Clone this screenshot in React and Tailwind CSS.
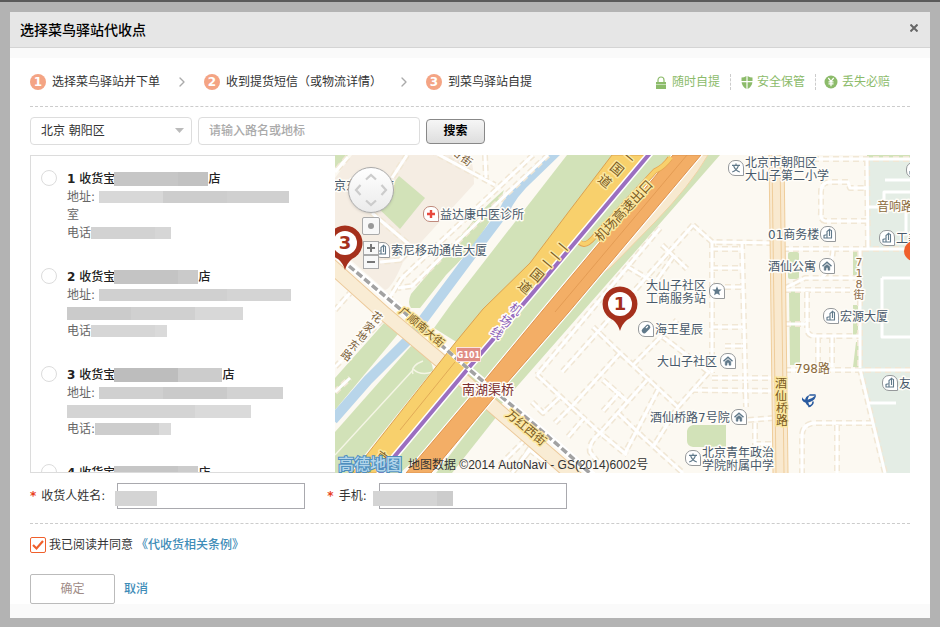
import { useState } from "react";
import clsx from "clsx";
import { ChevronRight } from "lucide-react";

const STEPS = ["选择菜鸟驿站并下单", "收到提货短信（或物流详情）", "到菜鸟驿站自提"];

// Each masked field is a run of grey blocks.
const STATIONS = [
  {
    id: 1,
    name: ["w-16 bg-[#c6c6c6]", "w-[30px] bg-[#c2c2c2]"],
    address: ["w-16 bg-[#d8d8d8]", "w-16 bg-[#cdcdcd]", "w-[62px] bg-[#d0d0d0]"],
    extraText: "室",
    phone: ["w-16 bg-[#d2d2d2]", "w-4 bg-[#d6d6d6]"],
  },
  {
    id: 2,
    name: ["w-16 bg-[#c4c4c4]", "w-5 bg-[#cacaca]"],
    address: ["w-32 bg-[#d0d0d0]", "w-16 bg-[#d4d4d4]"],
    extra: ["w-16 bg-[#cbcbcb]", "w-16 bg-[#d0d0d0]", "w-12 bg-[#d8d8d8]"],
    phone: ["w-16 bg-[#d6d6d6]", "w-3 bg-[#dadada]"],
  },
  {
    id: 3,
    name: ["w-16 bg-[#bdbdbd]", "w-11 bg-[#cccccc]"],
    address: ["w-16 bg-[#d0d0d0]", "w-16 bg-[#cacaca]", "w-14 bg-[#d2d2d2]"],
    extra: ["w-32 bg-[#d4d4d4]", "w-14 bg-[#dadada]"],
    phone: ["w-16 bg-[#cdcdcd]", "w-3 bg-[#dadada]"],
    colon: true,
  },
  {
    id: 4,
    name: ["w-16 bg-[#c6c6c6]", "w-5 bg-[#cccccc]"],
    address: ["w-32 bg-[#d0d0d0]", "w-16 bg-[#d4d4d4]"],
    phone: ["w-16 bg-[#d2d2d2]", "w-4 bg-[#d6d6d6]"],
  },
];

const MINOR_ROADS = [
  // between the expressway and the north-south avenue
  "M660 228 L537 375",
  "M693 225 L603 326 L562 372",
  "M693 225 L712 242 L772 243",
  "M712 242 V373",
  "M662 245 L687 269",
  "M673 257 L650 290",
  "M628 267 L650 280 L663 300",
  "M712 249 H742",
  "M712 268 H742",
  "M742 243 L746 407",
  "M725 287 H742",
  "M725 346 H743",
  "M712 327 H745",
  "M712 378 L772 378",
  "M692 390 L773 391",
  "M593 327 L620 353 L678 407",
  "M537 375 L600 433 L627 455",
  "M618 413 L643 437 L683 473",
  "M620 353 L573 405 L555 423",
  "M647 380 L600 433 Q588 443 590 452 L597 461",
  "M658 390 L625 453",
  "M708 373 L678 407 L653 447",
  "M633 365 L677 320",
  "M663 337 L710 373",
  "M603 380 L628 402",
  "M603 411 L620 392",
  "M532 402 L543 413 L560 397",
  "M585 417 L568 437",
  "M748 420 L773 418",
  "M755 423 V445",
  "M755 444 H773",
  "M530 448 L518 465",
  "M512 473 L530 450 L545 462",
  "M500 465 L540 425",
  // east side
  "M783 159 H910",
  "M867 160 L868 248",
  "M867 221 H825 Q820 220 821 212 V192 Q821 182 830 182 H848 L850 188 H866",
  "M783 249 H910",
  "M833 250 Q832 268 822 278",
  "M860 250 V368",
  "M785 288 L805 278 H857",
  "M785 290 H850",
  "M807 292 V328 Q807 336 815 336 H860",
  "M785 324 H807",
  "M818 337 V367",
  "M832 337 V367",
  "M785 370 H910",
  "M860 369 L885 473",
  "M872 423 H813 Q802 425 802 436 V473",
  "M837 425 V473",
  // west side
  "M348 157 L335 172",
  "M407 155 L392 178",
  "M485 155 L486 178",
  "M430 150 L495 185",
  "M533 155 L402 278 L388 300",
  "M548 155 L495 205 L412 286 L398 288",
  "M372 213 L412 247 L400 260 L380 262",
  "M335 310 L350 293",
  "M382 320 L335 367",
  "M335 392 L350 378",
];

const PARK_ROADS = [
  "M882 278 H910",
  "M882 278 V337 H910",
  "M868 207 H910",
  "M885 180 H910",
  "M884 202 V192 H910",
  "M868 403 H896",
  "M906 212 V232",
];

function Blocks({ parts, className }) {
  return (
    <span className={clsx("flex", className)} aria-hidden="true">
      {parts.map((part, i) => (
        <span key={i} className={part} />
      ))}
    </span>
  );
}

function Steps() {
  return (
    <ol className="flex items-center">
      {STEPS.map((step, i) => (
        <li key={step} className="flex items-center">
          {i > 0 && <ChevronRight size={16} strokeWidth={2} className="mx-3.5 text-[#aaa]" />}
          <span className="mr-1.5 flex size-4 items-center justify-center rounded-full bg-[#f4a484] text-xs leading-4 font-bold text-white">
            {i + 1}
          </span>
          {step}
        </li>
      ))}
    </ol>
  );
}

function Promises() {
  return (
    <ul className="flex items-center text-[#8cbb6a]">
      <li className="flex items-center gap-1.5 pr-2.5">
        <svg width="10" height="13" viewBox="0 0 10 13" fill="none">
          <path d="M2 7V4a3 3 0 0 1 6 0v3" stroke="currentColor" strokeWidth="1.2" />
          <path d="M0 6h10v2.500H0zM0 9h10v4H0z" fill="currentColor" />
        </svg>
        随时自提
      </li>
      <li className="flex items-center gap-1 border-l border-dashed border-[#ccc] px-2.5">
        <svg width="12" height="13" viewBox="0 0 12 13" fill="currentColor">
          <path d="M.5 1.500Q3 1.500 5.400 0V5H.500zM11.500 1.500Q9 1.500 6.600 0V5h4.900zM.600 6.200h4.800V13Q1 10.500.600 6.200zM11.400 6.200H6.600V13Q11 10.500 11.400 6.200z" />
        </svg>
        安全保管
      </li>
      <li className="flex items-center gap-1 border-l border-dashed border-[#ccc] pl-2">
        <svg width="14" height="14" viewBox="0 0 14 14" fill="none">
          <circle cx="7" cy="7" r="6.500" fill="currentColor" />
          <path d="M4.300 3 7 6.300 9.700 3M7 6.300V11.200M4.500 6.800h5M4.500 8.900h5" stroke="#fff" strokeWidth="1.200" />
        </svg>
        丢失必赔
      </li>
    </ul>
  );
}

function StationList({ selected, onSelect }) {
  return (
    <ul className="h-[318px] w-[305px] shrink-0 overflow-y-auto border border-r-0 border-[#dcdcdc] pt-3.5 pl-2.5 [scrollbar-width:none]">
      {STATIONS.map((s) => (
        <li key={s.id} className="mb-[26px] flex gap-2.5">
          <input
            type="radio"
            id={`station-${s.id}`}
            name="station"
            checked={selected === s.id}
            onChange={() => onSelect(s.id)}
            className="size-4 shrink-0 appearance-none rounded-full border border-[#dcdcdc] bg-white checked:border-[#f0602c] checked:bg-[#f0602c]"
          />
          <label htmlFor={`station-${s.id}`} className="block leading-[18px] text-[#666]">
            <span className="flex h-[18px] items-center font-medium text-[#222]">
              <b className="mr-1">{s.id}</b>收货宝
              <Blocks parts={s.name} className="-ml-px h-3.5" />店
            </span>
            <span className="flex h-[18px] items-center">
              地址:
              <Blocks parts={s.address} className="ml-1 h-3" />
            </span>
            <span className="flex h-[18px] items-center">
              {s.extraText}
              {s.extra && <Blocks parts={s.extra} className="h-[13px]" />}
            </span>
            <span className="flex h-[18px] items-center">
              {s.colon ? "电话:" : "电话"}
              <Blocks parts={s.phone} className="h-3" />
            </span>
          </label>
        </li>
      ))}
    </ul>
  );
}

function Label({ x, y, children, fill = "#48596b", halo = "#fffdf8", rotate = 0, size = 12, anchor = "start" }) {
  return (
    <text
      transform={`translate(${x} ${y}) rotate(${rotate})`}
      dy={size / 3 + 0.5}
      fontSize={size}
      fill={fill}
      stroke={halo}
      strokeWidth="3"
      strokeLinejoin="round"
      paintOrder="stroke"
      textAnchor={anchor}
    >
      {children}
    </text>
  );
}

// One character per point, for names that follow a road downwards.
function RoadName({ chars, ...rest }) {
  return chars.map(([c, x, y], i) => (
    <Label key={i} x={x} y={y} anchor="middle" {...rest}>
      {c}
    </Label>
  ));
}

const POI_GLYPHS = {
  building: (
    <path
      d="M-4.500 4H4M-4 4V1.500L-1 .500V4M-1 3V-2.500L1.500-4.500V2M1.500-4.500 3.500-3.500V4"
      fill="none"
      stroke="#60798a"
      strokeWidth="1.100"
    />
  ),
  home: (
    <g fill="none" stroke="#60798a">
      <path d="M-4.500 .300 0-3.800 4.500 .300" strokeWidth="1.500" />
      <path d="M-2.800 .800 0-1.500 2.800 .800V4.200H1V1.800H-1V4.200H-2.800Z" fill="#60798a" strokeWidth=".5" />
    </g>
  ),
  star: <path d="M0-4.800 1.300-1.600 4.700-1.400 2.100.8 2.900 4.200 0 2.400-2.900 4.200-2.100.8-4.700-1.400-1.300-1.600Z" fill="#60798a" />,
  pill: (
    <g transform="rotate(-45)">
      <rect x="-5" y="-2.500" width="10" height="5" rx="2.500" fill="#60798a" />
      <rect x="0.500" y="-1.300" width="3" height="1.200" rx=".6" fill="#fff" />
    </g>
  ),
  cross: <path d="M-4 0H4M0 -4V4" stroke="#e8493f" strokeWidth="2.400" />,
  school: <path d="M0-4.500V-3M-4-2.600H4M2.500-2.600Q1 2.500-3.800 4M-2.500-2.600Q-1 2.500 3.800 4" fill="none" stroke="#60798a" strokeWidth="1.200" />,
};

function Poi({ x, y, kind }) {
  return (
    <g transform={`translate(${x} ${y})`}>
      <path
        d="M-1-7.500H1A6.500 6.500 0 0 1 7.500-1V7.500H-1A6.500 6.500 0 0 1-7.500 1V-1A6.500 6.500 0 0 1-1-7.500Z"
        fill="#fff"
        stroke={kind === "cross" ? "#c08a7c" : "#96999b"}
      />
      {POI_GLYPHS[kind]}
    </g>
  );
}

function Pin({ x, y, label }) {
  return (
    <g transform={`translate(${x} ${y})`}>
      <path d="M0 27Q-2 20-7 16A17.500 17.500 0 1 1 7 16Q2 20 0 27Z" fill="#a5301c" />
      <circle r="12" fill="#fff" />
      <text y="6" textAnchor="middle" fontSize="18" fontWeight="700" fill="#a5301c">
        {label}
      </text>
    </g>
  );
}

function Roads({ paths, edge }) {
  return (
    <g fill="none" strokeLinejoin="round">
      {edge && paths.map((d) => <path key={d} d={d} stroke="#f1e7d5" strokeWidth="6" strokeDasharray="6 4" />)}
      {paths.map((d) => (
        <path key={d} d={d} stroke="#fff" strokeWidth="3" />
      ))}
    </g>
  );
}

function MapDrawing() {
  const brown = { fill: "#7a5a22", halo: "#fbe7a0" };
  return (
    <svg viewBox="335 155 575 318" preserveAspectRatio="xMinYMid slice" className="size-full" role="img" aria-label="地图">
      <rect x="335" y="155" width="575" height="318" fill="#fcf9f2" />
      <path d="M352 155H470Q474 168 474 184L403 262Q392 288 385 290L335 246V178Z" fill="#f5ede3" />
      <path d="M399 176 425 198 400 229 376 206Z" fill="#d2e2b8" />
      <path d="M335 155H348L335 168Z" fill="#d2e2b8" />

      {/* parkland */}
      <g fill="#d2e2b8">
        <path d="M504 190Q480 211 470 225L411 294Q407 303 411 308H420L446 275Q490 232 504 190Z" />
        <path d="M384 323 398 334 335 410V378Z" />
        <path d="M411 346Q431 352 433 370L350 473H335V432Z" />
        <path d="M567 155H650L458 343 434 328 452 303Z" />
        <path d="M650 155H720L492 415 478 403 400 473H380Z" />
        <path d="M490 403 501 411 452 473H436Z" />
      </g>
      <path d="M413 374Q410 366 423 361M413 369Q420 376 433 372M335 455 413 370" fill="none" stroke="#f4f5e4" strokeWidth="1.500" />
      <path d="M867 155H910V473H883L860 367V252L868 248Z" fill="#e4ede5" />
      <g fill="#d2e2b8">
        <path d="M867 155H910V158H867Z" />
        <rect x="788" y="252" width="11" height="27" rx="2" />
        <path d="M789 291H800V365H790Z" />
        <path d="M853 252H859V278H853ZM853 305H858V335H853ZM856 342H859V367H853Z" />
        <path d="M693 425H726V447H693Q687 446 687 441V431Q688 426 693 425Z" />
      </g>
      <path d="M560 148 530 177Q512 193 503 213L475 250 408 340 368 380 333 420" fill="none" stroke="#b8d5ea" strokeWidth="10" />

      <Roads paths={MINOR_ROADS} edge />
      <Roads paths={PARK_ROADS} />

      {/* avenue running through the south-west */}
      <path d="M328 263 385 314 442 362 502 414 582 483" fill="none" stroke="#ecc99a" strokeWidth="15" />
      <path d="M328 263 385 314 442 362 502 414 582 483" fill="none" stroke="#f9ecd4" strokeWidth="13" />
      <path d="M336 254 405 313 458 360 485 383 535 425 596 478" fill="none" stroke="#fff" strokeWidth="7" />

      {/* north-south avenue */}
      <path d="M769 155H784L788 473H773Z" fill="#f9e9cf" />
      <path d="M769 155 773 473M784 155 788 473M772 155 776 473M780 155 784 473" stroke="#efcd9b" fill="none" />

      {/* airport expressway */}
      <path d="M708 155Q690 186 655 222L610 268Q603 274 597 272L690 155Z" fill="#f7e9cf" stroke="#eed3a5" />
      <path d="M673 155H701L568 313 492 400 431 473H406L485 380 543 310Z" fill="#f3ae66" stroke="#fff" strokeWidth="3" />
      <path d="M673 155H701L568 313 492 400 431 473H406L485 380 543 310Z" fill="#f3ae66" stroke="#dd9450" />
      <path d="M687 155 555 312" stroke="#df974f" strokeWidth=".8" />
      <path d="M670 158Q664 167 655 171L595 236Q582 252 577 237" fill="none" stroke="#e5a350" strokeWidth="5.500" />
      <path d="M671 157Q664 167 655 171L595 236Q582 252 577 236" fill="none" stroke="#f8d06c" strokeWidth="4" />

      {/* national road 111 with the metro line along it */}
      <path d="M612 155H647L530 293 465 368 380 473H352L365 457 455 343 483 309 530 263 570 210Z" fill="#f8d06c" stroke="#dba150" />
      <path d="M455 362 400 430" stroke="#dba150" strokeWidth=".8" />
      <path d="M651 152 531 295 466 371 379 475" fill="none" stroke="#fff" strokeWidth="7" />
      <path d="M651 152 531 295 466 371 379 475" fill="none" stroke="#9b6fc0" strokeWidth="4" />

      <path d="M349 266 405 313 458 360 485 383 535 425 592 475" fill="none" stroke="#fff" strokeWidth="4" />
      <path d="M349 266 405 313 458 360 485 383 535 425 592 475" fill="none" stroke="#a2a2a2" strokeWidth="3.500" strokeDasharray="7 3" />

      <RoadName chars={[["路", 457, 152], ["街", 467, 160]]} fill="#7a6038" rotate={38} size={11} />
      <RoadName chars={[["花", 377, 317], ["家", 369, 327], ["地", 362, 336], ["东", 354, 345], ["路", 347, 355]]} fill="#7a6038" rotate={36} size={11} />
      <RoadName chars={[["一", 628, 157], ["国", 617, 169], ["道", 605, 181]]} rotate={40} size={13} {...brown} />
      <RoadName chars={[["一", 563, 247], ["一", 555, 256], ["一", 547, 264], ["国", 537, 275], ["道", 525, 287]]} rotate={40} size={13} {...brown} />
      <RoadName chars={[["京", 382, 457]]} rotate={36} {...brown} />
      <RoadName chars={[["机", 516, 309], ["场", 506, 321], ["线", 497, 333]]} fill="#8a5cb8" rotate={36} />
      <Label x={597} y={239} rotate={-47} size={13} {...brown}>机场高速出口</Label>
      <Label x={401} y={309} rotate={40} size={11} {...brown}>广顺南大街</Label>
      <Label x={508} y={412} rotate={40} size={12} {...brown}>万红西街</Label>
      <RoadName chars={[["酒", 781, 383], ["仙", 781, 396], ["桥", 782, 408], ["路", 782, 420]]} {...brown} />
      <RoadName chars={[["7", 859, 262], ["1", 859, 273], ["8", 859, 284], ["街", 859, 295]]} fill="#8a6a48" size={11} />
      <Label x={795} y={368} fill="#8a6a3c">798路</Label>
      <Label x={877} y={206} fill="#8a6a3c">音响路</Label>

      <rect x="456.500" y="347.500" width="24" height="14" fill="#e08c84" stroke="#fbe3df" />
      <text x="468.500" y="358" textAnchor="middle" fontSize="8" fontWeight="700" fill="#fff">G101</text>
      <Label x={462} y={389} size={13} fill="#7b2f2f">南湖渠桥</Label>

      <Label x={334} y={185}>京东大酒店</Label>
      <Poi x={431} y={214} kind="cross" />
      <Label x={440} y={214}>益达康中医诊所</Label>
      <Poi x={382} y={250} kind="building" />
      <Label x={391} y={250}>索尼移动通信大厦</Label>
      <Poi x={736} y={168} kind="school" />
      <Label x={745} y={162}>北京市朝阳区</Label>
      <Label x={745} y={175}>大山子第二小学</Label>
      <Label x={768} y={234}>01商务楼</Label>
      <Poi x={828} y={234} kind="building" />
      <Label x={768} y={266}>酒仙公寓</Label>
      <Poi x={827} y={266} kind="home" />
      <Poi x={914} y={170} kind="building" />
      <Poi x={887} y={238} kind="building" />
      <Label x={896} y={238}>工美大厦</Label>
      <Poi x={831} y={316} kind="building" />
      <Label x={840} y={316}>宏源大厦</Label>
      <Poi x={890} y={383} kind="building" />
      <Label x={899} y={383}>友谊</Label>
      <Label x={646} y={285}>大山子社区</Label>
      <Label x={646} y={298}>工商服务站</Label>
      <Poi x={717} y={291} kind="star" />
      <Poi x={646} y={329} kind="pill" />
      <Label x={655} y={329}>海王星辰</Label>
      <Label x={657} y={361}>大山子社区</Label>
      <Poi x={728} y={361} kind="home" />
      <Label x={650} y={417}>酒仙桥路7号院</Label>
      <Poi x={739} y={417} kind="home" />
      <Poi x={693} y={458} kind="school" />
      <Label x={702} y={452}>北京青年政治</Label>
      <Label x={702} y={465}>学院附属中学</Label>

      <g transform="translate(809 401)" fill="#2a5ba0">
        <path d="M-7-4Q-6-1-2-1 3-2 7-6 7-1 1 1-5 3-7-1Z" />
        <path d="M1-6Q-2-3-1 1 0 4 2 6-3 5-4 0-4-5 1-6Z" />
        <path d="M1-6H6M0 5.500Q4 4 4 1" fill="none" stroke="#2a5ba0" strokeWidth="1.600" strokeLinecap="round" />
      </g>

      <circle cx="914" cy="251" r="10" fill="#f0602c" />
      <Pin x={345} y={243} label="3" />
      <Pin x={620} y={304} label="1" />
    </svg>
  );
}

function StationMap() {
  const square = "flex items-center justify-center border border-[#aaa] bg-[#f8f8f8]";
  return (
    <div className="relative h-[318px] min-w-0 flex-1 overflow-hidden">
      <MapDrawing />
      <div className="absolute top-3 left-3 flex w-12 flex-col items-center">
        <button
          type="button"
          aria-label="移动地图"
          className="size-[46px] rounded-full border border-[#aaa] bg-linear-to-b from-white to-[#ebebeb] shadow-sm"
        >
          <svg viewBox="0 0 44 44" fill="none" stroke="#ccc" strokeWidth="2.200">
            <path d="M17 11.500 22 7l5 4.500M17 32.500l5 4.500 5-4.500M11.500 17 7 22l4.500 5M32.500 17l4.500 5-4.500 5" />
          </svg>
        </button>
        <button type="button" aria-label="定位" className={clsx(square, "mt-1 size-[18px] rounded-xs")}>
          <span className="size-1.5 rounded-full bg-[#999]" />
        </button>
        <button type="button" aria-label="放大" className={clsx(square, "mt-1.5 h-3.5 w-4")}>
          <svg width="10" height="10" viewBox="0 0 10 10" stroke="#777" strokeWidth="2">
            <path d="M1 5h8M5 1v8" />
          </svg>
        </button>
        <button type="button" aria-label="缩小" className={clsx(square, "h-3.5 w-4")}>
          <svg width="10" height="10" viewBox="0 0 10 10" stroke="#777" strokeWidth="2">
            <path d="M1 5h8" />
          </svg>
        </button>
      </div>
      <p className="absolute bottom-0 left-[3px] flex items-center gap-1.5 leading-4 text-[#333]">
        <span className="text-base leading-4 font-medium text-[#b4d6ea] [-webkit-text-stroke:2px_#4f8fbf] [paint-order:stroke]">
          高德地图
        </span>
        <span className="font-['Liberation_Sans','Noto_Sans_CJK_SC',sans-serif] whitespace-nowrap">
          地图数据 ©2014 AutoNavi - GS(2014)6002号
        </span>
      </p>
    </div>
  );
}

function Field({ id, label, mask, maskClass }) {
  return (
    <div className="flex items-center">
      <label htmlFor={id} className="flex items-center">
        <span className="mr-[5px] font-bold text-[#e8401c]">*</span>
        {label}:
      </label>
      <div className="relative ml-3">
        <input id={id} type="text" className="block h-[26px] w-[188px] border border-[#a9a9ae] bg-white px-1.5 outline-none" />
        <Blocks parts={mask} className={clsx("absolute h-[15px]", maskClass)} />
      </div>
    </div>
  );
}

export default function App() {
  const [station, setStation] = useState(null);
  const [agreed, setAgreed] = useState(true);

  return (
    <div className="min-h-screen border-t-2 border-[#5a5a5a] bg-[#b3b3b3] px-2.5 pt-2.5 pb-2 font-['DejaVu_Sans','Noto_Sans_CJK_SC',sans-serif] text-xs leading-4 text-[#333]">
      <div role="dialog" aria-labelledby="dialog-title" className="bg-white">
        <header className="flex h-9 items-center justify-between border-b border-[#d4d4d4] bg-[#e6e6e6] pr-3 pl-2.5">
          <h1 id="dialog-title" className="text-sm leading-5 font-medium text-black">
            选择菜鸟驿站代收点
          </h1>
          <button type="button" aria-label="关闭" className="mb-1">
            <svg width="8" height="8" viewBox="0 0 8 8" stroke="#666" strokeWidth="2">
              <path d="M.500.500l7 7M7.500.500l-7 7" />
            </svg>
          </button>
        </header>

        <main className="border-t-10 border-b-14 border-[#fafafa] px-5">
          <div className="flex h-[49px] items-center justify-between border-b border-dashed border-[#ccc] pr-5">
            <Steps />
            <Promises />
          </div>

          <form className="mt-2.5 flex items-center gap-1.5" onSubmit={(e) => e.preventDefault()}>
            <div className="relative">
              <select aria-label="地区" className="h-7 w-[162px] appearance-none rounded-sm border border-[#ddd] bg-white pl-2.5">
                <option>北京 朝阳区</option>
              </select>
              <svg width="9" height="5" viewBox="0 0 9 5" fill="#bbb" className="pointer-events-none absolute top-[11px] right-2">
                <path d="M0 0h9L4.500 5z" />
              </svg>
            </div>
            <input
              type="text"
              aria-label="路名或地标"
              placeholder="请输入路名或地标"
              className="h-7 w-[222px] rounded-sm border border-[#ddd] px-2.5 outline-none placeholder:font-medium placeholder:text-[#aaa]"
            />
            <button
              type="submit"
              className="h-[25px] w-[59px] rounded border border-[#888] bg-linear-to-b from-[#f6f6f6] to-[#dedede] font-bold text-black"
            >
              搜索
            </button>
          </form>

          <div className="mt-2.5 flex">
            <StationList selected={station} onSelect={setStation} />
            <StationMap />
          </div>

          <div className="mt-2.5 flex gap-[22px]">
            <Field id="receiver" label="收货人姓名" mask={["w-[42px] bg-[#d4d4d4]"]} maskClass="top-2 -left-0.5" />
            <Field id="mobile" label="手机" mask={["w-16 bg-[#d4d4d4]", "w-4 bg-[#cccccc]"]} maskClass="top-2 -left-1.5" />
          </div>

          <div className="mt-3.5 flex items-center border-t border-dashed border-[#ccc] pt-[13px]">
            <span className="relative size-4">
              <input
                type="checkbox"
                id="agree"
                checked={agreed}
                onChange={(e) => setAgreed(e.target.checked)}
                className="block size-4 appearance-none rounded-xs border border-[#f0602c] bg-white"
              />
              {agreed && (
                <svg viewBox="0 0 16 16" fill="none" stroke="#f0602c" strokeWidth="2.200" className="pointer-events-none absolute inset-0">
                  <path d="M3 8l3.500 3.500L13 4" />
                </svg>
              )}
            </span>
            <label htmlFor="agree" className="ml-[3px]">
              我已阅读并同意
            </label>
            <a href="#terms" className="ml-[3px] font-medium text-[#3f8db8]">
              《代收货相关条例》
            </a>
          </div>

          <div className="mt-[21px] flex items-center gap-[9px]">
            <button type="button" className="h-[30px] w-[85px] rounded-xs border border-[#bbb] bg-white text-[#a08c88]">
              确定
            </button>
            <a href="#cancel" className="font-medium text-[#3f8db8]">
              取消
            </a>
          </div>
        </main>
      </div>
    </div>
  );
}
